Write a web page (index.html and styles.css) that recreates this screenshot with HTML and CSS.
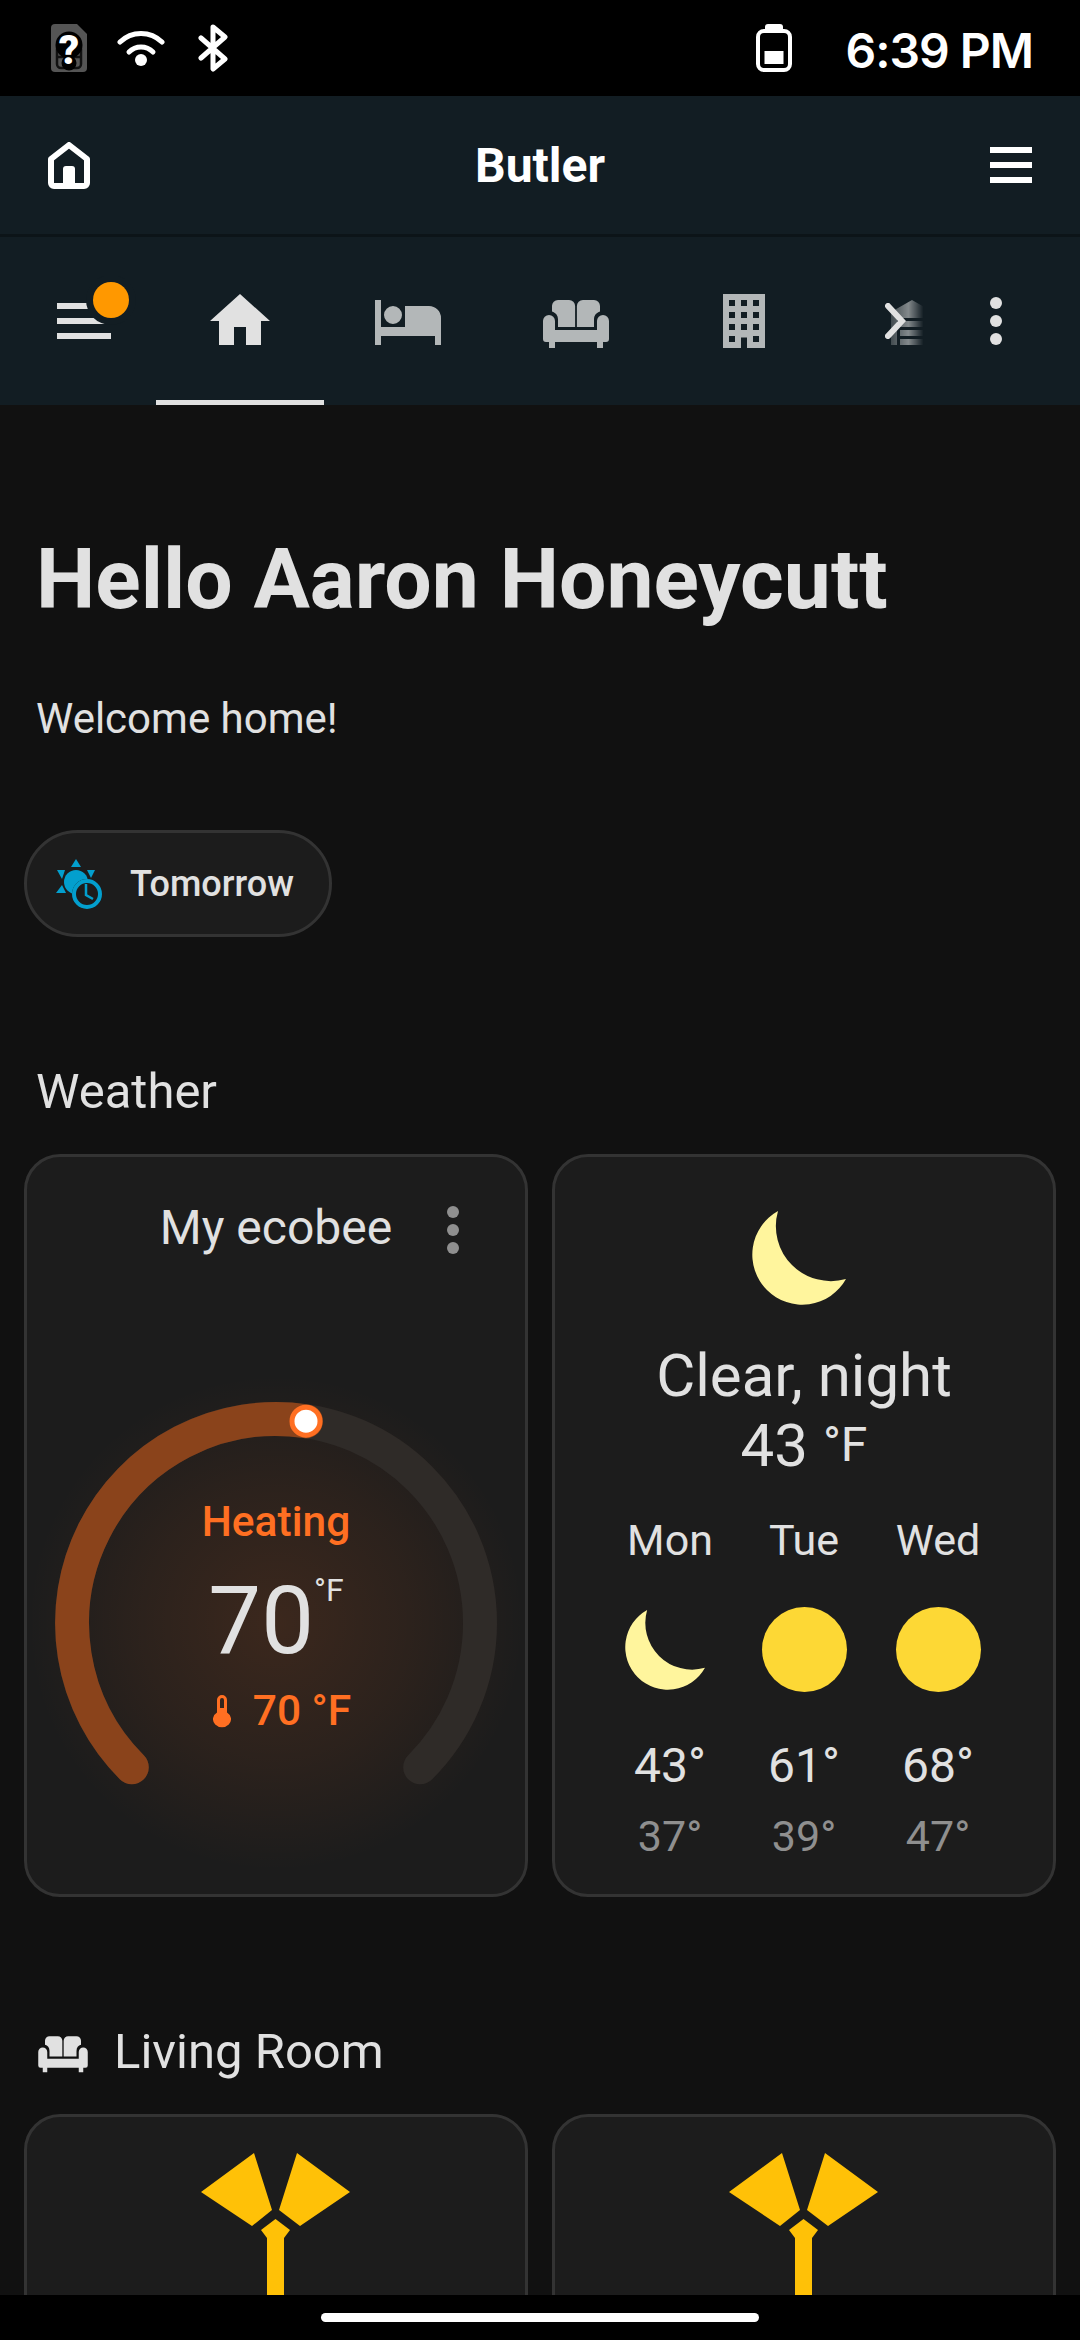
FILE: index.html
```html
<!DOCTYPE html>
<html lang="en">
<head>
    <meta charset="UTF-8">
    <meta name="viewport" content="width=device-width, initial-scale=1.0">
    <title>Butler</title>
    <link rel="stylesheet" href="styles.css">
</head>
<body>
    <div class="status-bar">
        <div class="status-icons">
            <div class="sim">
                <svg viewBox="0 0 36 48">
                    <path fill="#555" d="M4 0h22l10 10v34a4 4 0 0 1-4 4H4a4 4 0 0 1-4-4V4a4 4 0 0 1 4-4z"/>
                    <path fill="none" stroke="#111" stroke-width="2.500" d="M6 26h24v14a4 4 0 0 1-4 4H10a4 4 0 0 1-4-4zM6 33h24"/>
                    <circle cx="18" cy="21" r="13.500" fill="#000"/>
                    <circle cx="18" cy="39" r="7.500" fill="#000"/>
                </svg>
                <span>?</span>
            </div>
            <svg class="icon-wifi" viewBox="0 0 48 36">
                <g fill="none" stroke="#fff" stroke-width="5" stroke-linecap="round">
                    <path d="M3 12a30 30 0 0 1 42 0"/>
                    <path d="M12 22a17 17 0 0 1 24 0"/>
                </g>
                <circle cx="24" cy="30" r="6" fill="#fff"/>
            </svg>
            <svg class="icon-bt" viewBox="0 0 30 48">
                <path fill="none" stroke="#fff" stroke-width="5" stroke-linecap="round" stroke-linejoin="round" d="M3 14l24 21-12 10V3l12 10L3 34"/>
            </svg>
        </div>
        <div class="status-right">
            <svg class="icon-battery" viewBox="0 0 36 48">
                <path fill="#fff" d="M12 0h12a3 3 0 0 1 3 3v3h-18V3a3 3 0 0 1 3-3z"/>
                <rect x="2" y="7" width="32" height="39" rx="6" fill="none" stroke="#fff" stroke-width="4"/>
                <rect x="8.500" y="27" width="19" height="13" fill="#fff"/>
            </svg>
            <span class="clock">6:39 PM</span>
        </div>
    </div>

    <header class="app-header">
        <svg class="icon-home-outline" viewBox="0 0 42 47">
            <path fill="none" stroke="#fff" stroke-width="6" stroke-linejoin="round" d="M21 3L39 17v24a3 3 0 0 1-3 3H6a3 3 0 0 1-3-3V17z"/>
            <path fill="#fff" d="M15 27a3 3 0 0 1 3-3h6a3 3 0 0 1 3 3v17H15z"/>
        </svg>
        <h1 class="app-title">Butler</h1>
        <div class="hamburger"><span></span><span></span><span></span></div>
    </header>

    <nav class="tab-bar">
        <div class="tab-menu">
            <svg class="icon-menu" viewBox="0 0 90 66">
                <path fill="#e1e1e1" d="M3 27h54v6H3zM3 42h54v6H3z"/>
                <circle cx="57" cy="24" r="25" fill="#121d23"/>
                <path fill="#e1e1e1" d="M3 57h54v6H3z"/>
                <circle cx="57" cy="24" r="18" fill="#ff9800"/>
            </svg>
        </div>
        <div class="tabs">
            <div class="tab tab-active">
                <svg viewBox="0 0 24 24"><path d="M10,20V14H14V20H19V12H22L12,3L2,12H5V20H10Z"/></svg>
            </div>
            <div class="tab">
                <svg viewBox="0 0 24 24"><path d="M19,7H11V14H3V5H1V20H3V17H21V20H23V11A4,4 0 0,0 19,7M7,13A3,3 0 0,0 10,10A3,3 0 0,0 7,7A3,3 0 0,0 4,10A3,3 0 0,0 7,13Z"/></svg>
            </div>
            <div class="tab">
                <svg viewBox="0 0 24 24"><use href="#sofa"/></svg>
            </div>
            <div class="tab">
                <svg viewBox="0 0 24 24"><path d="M5,3V21H11V17.5H13V21H19V3H5M7,5H9V7H7V5M11,5H13V7H11V5M15,5H17V7H15V5M7,9H9V11H7V9M11,9H13V11H11V9M15,9H17V11H15V9M7,13H9V15H7V13M11,13H13V15H11V13M15,13H17V15H15V13M7,17H9V19H7V17M15,17H17V19H15V17Z"/></svg>
            </div>
            <div class="tab tab-faded">
                <svg viewBox="0 0 24 24"><path d="M19 20H17V11H7V20H5V9L12 5L19 9V20M8 12H16V14H8V12M8 15H16V17H8V15M16 18V20H8V18H16Z"/></svg>
            </div>
            <svg class="tab-chevron" viewBox="0 0 21 36">
                <path fill="none" stroke="#e1e1e1" stroke-width="6" stroke-linecap="round" d="M3 3L17 18 3 33"/>
            </svg>
        </div>
        <div class="tab-dots"><span></span><span></span><span></span></div>
    </nav>

    <main class="content">
        <h2 class="greeting">Hello Aaron Honeycutt</h2>
        <p class="welcome">Welcome home!</p>

        <div class="chip">
            <svg class="chip-icon" viewBox="56 860 48 50">
                <g fill="#039fce">
                    <path d="M76 860l5 8H71zM57 871h8l-3 9zM87 871h8l-4 8zM56 894l6-8 4 8z"/>
                    <circle cx="76" cy="883" r="12"/>
                </g>
                <circle cx="87" cy="895" r="15" fill="#1c1c1c"/>
                <circle cx="87" cy="895" r="13" fill="none" stroke="#039fce" stroke-width="4"/>
                <path fill="none" stroke="#039fce" stroke-width="2.500" d="M86 885v11l7 4"/>
            </svg>
            <span>Tomorrow</span>
        </div>

        <h3 class="section-title">Weather</h3>
        <div class="card-grid">
            <section class="card card-climate">
                <div class="climate-head">
                    <span>My ecobee</span>
                    <div class="card-dots"><span></span><span></span><span></span></div>
                </div>
                <div class="gauge">
                    <svg viewBox="0 0 498 500">
                        <defs>
                            <radialGradient id="glow">
                                <stop offset="0" stop-color="#ff6f22" stop-opacity="0.14"/>
                                <stop offset="0.55" stop-color="#ff6f22" stop-opacity="0.07"/>
                                <stop offset="1" stop-color="#ff6f22" stop-opacity="0"/>
                            </radialGradient>
                        </defs>
                        <circle cx="249" cy="252" r="248" fill="url(#glow)"/>
                        <path fill="none" stroke="#2f2b28" stroke-width="34" stroke-linecap="round" d="M104.800 396.200A204 204 0 1 1 393.200 396.200"/>
                        <path fill="none" stroke="#8a431b" stroke-width="34" stroke-linecap="round" d="M104.800 396.200A204 204 0 0 1 279 50.200"/>
                        <circle cx="279" cy="50.200" r="14" fill="#fff" stroke="#ff6f22" stroke-width="5"/>
                    </svg>
                    <div class="gauge-labels">
                        <div class="gauge-mode">Heating</div>
                        <div class="gauge-temp">70<sup>°F</sup></div>
                        <div class="gauge-target">
                            <svg viewBox="0 0 18 33"><path fill="#ff6f22" d="M9 0a5 5 0 0 1 5 5v12.500a9 8 0 1 1-10 0V5a5 5 0 0 1 5-5zM9 3a2 2 0 0 0-2 2v8h4V5a2 2 0 0 0-2-2z" fill-rule="evenodd"/></svg>
                            <span>70 °F</span>
                        </div>
                    </div>
                </div>
            </section>

            <section class="card card-weather">
                <svg class="moon-large" viewBox="0 0 94 95"><path fill="#fff59d" d="M26 1A50 50 0 1 0 94 69A55 55 0 0 1 26 1Z"/></svg>
                <div class="condition">Clear, night</div>
                <div class="condition">43 <span class="condition-unit">°F</span></div>
                <div class="forecast">
                    <div class="day">
                        <div class="day-name">Mon</div>
                        <svg class="day-icon" viewBox="0 0 94 95"><path fill="#fff59d" d="M26 1A50 50 0 1 0 94 69A55 55 0 0 1 26 1Z"/></svg>
                        <div class="day-high">43°</div>
                        <div class="day-low">37°</div>
                    </div>
                    <div class="day">
                        <div class="day-name">Tue</div>
                        <div class="sun"></div>
                        <div class="day-high">61°</div>
                        <div class="day-low">39°</div>
                    </div>
                    <div class="day">
                        <div class="day-name">Wed</div>
                        <div class="sun"></div>
                        <div class="day-high">68°</div>
                        <div class="day-low">47°</div>
                    </div>
                </div>
            </section>
        </div>

        <h3 class="section-title section-room">
            <svg viewBox="0 0 24 24">
                <symbol id="sofa" viewBox="0 0 24 24">
                    <path d="M4 7a2 2 0 0 1 2-2h3.700a2 2 0 0 1 2 2v7H6V11.500C6 10 5.200 9.200 4 8.800zM20 7a2 2 0 0 0-2-2h-3.700a2 2 0 0 0-2 2v7H18V11.500C18 10 18.800 9.200 20 8.800z"/>
                    <path d="M3 10a2 2 0 0 1 2 2v3h14v-3a2 2 0 1 1 4 0v6a1 1 0 0 1-1 1h-1v2h-2v-2H5v2H3v-2H2a1 1 0 0 1-1-1v-6a2 2 0 0 1 2-2z"/>
                </symbol>
                <use href="#sofa"/>
            </svg>
            <span>Living Room</span>
        </h3>
        <div class="card-grid">
            <section class="card card-fan">
                <svg class="fan" viewBox="202 2153 150 142"><path fill="#ffc107" d="M255 2153L202 2192 253 2226 273 2210zM298 2153L351 2192 301 2226 280 2210zM276.500 2219L291 2230 285 2238V2295H268V2238L262 2230z"/></svg>
            </section>
            <section class="card card-fan">
                <svg class="fan" viewBox="202 2153 150 142"><path fill="#ffc107" d="M255 2153L202 2192 253 2226 273 2210zM298 2153L351 2192 301 2226 280 2210zM276.500 2219L291 2230 285 2238V2295H268V2238L262 2230z"/></svg>
            </section>
        </div>
    </main>

    <div class="nav-bar"><span class="nav-pill"></span></div>
</body>
</html>
```

FILE: styles.css
```css
* {
    box-sizing: border-box;
}
html, body {
    margin: 0;
    padding: 0;
}
body {
    width: 1080px;
    height: 2340px;
    overflow: hidden;
    display: flex;
    flex-direction: column;
    background-color: #111111;
    color: #e1e1e1;
    font-family: Roboto, "Liberation Sans", sans-serif;
}
h1, h2, h3, p {
    margin: 0;
    font-weight: 400;
}

/* status bar */
.status-bar {
    flex: 0 0 96px;
    background: #000;
    display: flex;
    justify-content: space-between;
    padding: 24px 47px 0 51px;
}
.status-icons {
    display: flex;
    align-items: flex-start;
}
.sim {
    position: relative;
    width: 36px;
    height: 48px;
}
.sim svg {
    display: block;
    width: 36px;
    height: 48px;
}
.sim span {
    position: absolute;
    left: 0;
    right: 0;
    top: 7px;
    text-align: center;
    font-weight: 900;
    font-size: 40px;
    line-height: 40px;
    color: #fff;
}
.icon-wifi {
    width: 48px;
    height: 36px;
    margin: 6px 0 0 30px;
}
.icon-bt {
    width: 30px;
    height: 48px;
    margin-left: 33px;
}
.status-right {
    display: flex;
    align-items: flex-start;
}
.icon-battery {
    width: 36px;
    height: 48px;
}
.clock {
    font-family: Inter, sans-serif;
    font-weight: 600;
    font-size: 48px;
    line-height: 48px;
    color: #fff;
    margin: 3px 0 0 53px;
    letter-spacing: -1px;
}

/* header */
.app-header {
    flex: 0 0 138px;
    background: #121d23;
    display: flex;
    align-items: center;
    justify-content: space-between;
    padding: 0 48px;
}
.icon-home-outline {
    width: 42px;
    height: 47px;
}
.app-title {
    font-size: 48px;
    font-weight: 700;
    color: #fff;
}
.hamburger {
    width: 42px;
    display: flex;
    flex-direction: column;
    gap: 9px;
}
.hamburger span {
    height: 6px;
    background: #fff;
}

/* tabs */
.tab-bar {
    flex: 0 0 171px;
    background: #121d23;
    border-top: 3px solid #0c1418;
    display: flex;
}
.tab-menu {
    flex: 0 0 156px;
    padding: 39px 0 0 54px;
}
.icon-menu {
    display: block;
    width: 90px;
    height: 66px;
}
.tabs {
    position: relative;
    flex: 0 0 792px;
    display: flex;
    overflow: hidden;
}
.tab {
    flex: 0 0 168px;
    height: 168px;
    display: flex;
    align-items: center;
    justify-content: center;
    border-bottom: 5px solid transparent;
    padding-top: 5px;
}
.tab svg {
    width: 72px;
    height: 72px;
    fill: #b3b7b8;
}
.tab-active {
    border-bottom-color: #e1e1e1;
}
.tab-active svg {
    fill: #e1e1e1;
}
.tab-faded svg {
    -webkit-mask-image: linear-gradient(to right, rgba(0, 0, 0, 0.3) 21%, rgba(0, 0, 0, 0.7) 45%, transparent 66%);
    mask-image: linear-gradient(to right, rgba(0, 0, 0, 0.3) 21%, rgba(0, 0, 0, 0.7) 45%, transparent 66%);
}
.tab-chevron {
    position: absolute;
    left: 729px;
    top: 66px;
    width: 21px;
    height: 36px;
}
.tab-dots {
    flex: 1;
    padding: 60px 0 0 42px;
    display: flex;
    flex-direction: column;
    gap: 6px;
}
.tab-dots span {
    width: 12px;
    height: 12px;
    border-radius: 50%;
    background: #e1e1e1;
}

/* content */
.content {
    flex: 1;
    min-height: 0;
    overflow: hidden;
}
.greeting {
    margin: 127px 36px 0;
    font-size: 84px;
    line-height: 96px;
    font-weight: 700;
}
.welcome {
    margin: 66px 36px 0;
    font-size: 42px;
    line-height: 50px;
}
.chip {
    display: inline-flex;
    align-items: center;
    gap: 26px;
    margin: 86px 0 0 24px;
    width: 308px;
    height: 107px;
    padding-left: 29px;
    border: 3px solid #333333;
    border-radius: 54px;
    background: #1c1c1c;
    font-size: 36px;
    font-weight: 500;
}
.chip-icon {
    width: 48px;
    height: 50px;
}
.section-title {
    margin: 127px 36px 0;
    font-size: 49px;
    line-height: 56px;
}
.section-room {
    display: flex;
    align-items: center;
    gap: 24px;
    margin: 127px 36px 0;
}
.section-room svg {
    width: 54px;
    height: 54px;
    fill: #e1e1e1;
}
.card-grid {
    display: grid;
    grid-template-columns: 1fr 1fr;
    gap: 24px;
    margin: 34px 24px 0;
}
.card {
    height: 743px;
    border: 3px solid #333333;
    border-radius: 36px;
    background: #1c1c1c;
}

/* thermostat card */
.climate-head {
    position: relative;
    margin-top: 43px;
    text-align: center;
    font-size: 48px;
    line-height: 56px;
}
.card-dots {
    position: absolute;
    right: 66px;
    top: 6px;
    display: flex;
    flex-direction: column;
    gap: 6px;
}
.card-dots span {
    width: 12px;
    height: 12px;
    border-radius: 50%;
    background: #8f8f8f;
}
.gauge {
    position: relative;
    margin-top: 115px;
}
.gauge > svg {
    display: block;
    width: 498px;
    height: 500px;
}
.gauge-labels {
    position: absolute;
    inset: 0;
    padding-top: 127px;
    text-align: center;
}
.gauge-mode {
    font-size: 42.500px;
    line-height: 48px;
    font-weight: 500;
    color: #ff6f22;
}
.gauge-temp {
    margin-top: 20px;
    font-size: 94px;
    line-height: 110px;
}
.gauge-temp sup {
    font-size: 32px;
    line-height: 0;
    vertical-align: 52px;
}
.gauge-target {
    display: flex;
    align-items: center;
    justify-content: center;
    gap: 22px;
    margin-top: 11px;
    padding-left: 12px;
    font-size: 42.500px;
    line-height: 48px;
    font-weight: 500;
    color: #ff6f22;
}
.gauge-target svg {
    width: 18px;
    height: 33px;
}

/* weather card */
.card-weather {
    display: flex;
    flex-direction: column;
    align-items: center;
    padding-top: 53px;
}
.moon-large {
    flex: 0 0 95px;
    width: 94px;
    height: 95px;
    margin: 0 10px 36px 0;
}
.condition {
    font-size: 60px;
    line-height: 69px;
}
.condition-unit {
    font-size: 48px;
    vertical-align: 5px;
}
.forecast {
    display: grid;
    grid-template-columns: repeat(3, 134px);
    margin-top: 36px;
    text-align: center;
}
.day {
    display: flex;
    flex-direction: column;
    align-items: center;
}
.day-name {
    font-size: 43px;
    line-height: 48px;
}
.day-icon {
    width: 80px;
    height: 85px;
    margin: 43px 10px 0 0;
}
.sun {
    width: 85px;
    height: 85px;
    margin-top: 43px;
    border-radius: 50%;
    background: #fdd835;
}
.day-high {
    margin-top: 46px;
    font-size: 48px;
    line-height: 56px;
}
.day-low {
    margin-top: 18px;
    font-size: 43px;
    line-height: 48px;
    color: #8f8f8f;
}

/* fan cards */
.card-fan {
    height: 420px;
    display: flex;
    justify-content: center;
    padding-top: 36px;
}
.fan {
    width: 150px;
    height: 142px;
}

/* navigation bar */
.nav-bar {
    flex: 0 0 45px;
    background: #000;
    display: flex;
    justify-content: center;
    padding-top: 18px;
}
.nav-pill {
    width: 438px;
    height: 9px;
    border-radius: 5px;
    background: #fff;
}
```
